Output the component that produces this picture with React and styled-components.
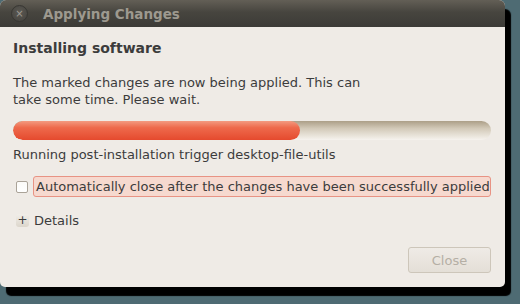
import React from 'react'
import styled, { createGlobalStyle } from 'styled-components'

const GlobalStyle = createGlobalStyle`
    html, body {
        margin: 0;
        padding: 0;
        background: #4e6b73;
        width: 520px;
        height: 304px;
        overflow: hidden;
    }
    * { box-sizing: border-box; }
`

const App = () => {
    return (<>
        <GlobalStyle />
        <Window>
            <TitleBar>
                <CloseDot>×</CloseDot>
                <Title>Applying Changes</Title>
            </TitleBar>
            <Body>
                <Heading>Installing software</Heading>
                <Message>
                    The marked changes are now being applied. This can<br />
                    take some time. Please wait.
                </Message>
                <Trough>
                    <Fill style={{ width: `${(287 / 478) * 100}%` }} />
                </Trough>
                <Status>Running post-installation trigger desktop-file-utils</Status>
                <CheckRow>
                    <CheckBox />
                    <CheckLabel>Automatically close after the changes have been successfully applied</CheckLabel>
                </CheckRow>
                <ExpanderRow>
                    <Expander>+</Expander>
                    <span>Details</span>
                </ExpanderRow>
                <Footer>
                    <Button disabled>Close</Button>
                </Footer>
            </Body>
        </Window>
    </>)
}

const Window = styled.div`
    width: 505px;
    height: 287px;
    display: flex;
    flex-direction: column;
    border-radius: 6px 6px 5px 5px;
    background: #efebe6;
    box-shadow: 6px 9px 1px #000;
    overflow: hidden;
    font-family: "DejaVu Sans", "Liberation Sans", sans-serif;
    color: #3c3c3c;
`

const TitleBar = styled.div`
    height: 27px;
    display: flex;
    align-items: center;
    padding-left: 11px;
    gap: 15px;
    background: linear-gradient(#635f56 0%, #47453f 45%, #3c3b37 100%);
`

const CloseDot = styled.div`
    width: 17px;
    height: 17px;
    border-radius: 50%;
    background: radial-gradient(circle at 50% 40%, #5a5852, #44423e);
    border: 1px solid #383733;
    color: #9e9a92;
    font-size: 10px;
    line-height: 15px;
    text-align: center;
`

const Title = styled.div`
    font-weight: bold;
    font-size: 13.5px;
    color: #9d998f;
`

const Body = styled.div`
    flex: 1;
    display: flex;
    flex-direction: column;
    padding: 0 14px 0 13px;
    font-size: 13px;
`

const Heading = styled.div`
    margin-top: 12px;
    font-weight: bold;
    font-size: 14px;
    line-height: 18px;
`

const Message = styled.div`
    margin-top: 17px;
    line-height: 17px;
`

const Trough = styled.div`
    margin-top: 13px;
    height: 19px;
    border-radius: 10px;
    background: linear-gradient(#ac9f88 0%, #d3cab9 40%, #f6f3ee 100%);
    overflow: hidden;
    display: flex;
`

const Fill = styled.div`
    height: 100%;
    border-radius: 10px;
    background: linear-gradient(#f39a80 0%, #ee6a4c 35%, #e54a2e 100%);
`

const Status = styled.div`
    margin-top: 6px;
    line-height: 17px;
`

const CheckRow = styled.div`
    margin-top: 13px;
    display: flex;
    align-items: center;
    gap: 5px;
`

const CheckBox = styled.div`
    margin-left: 3px;
    width: 12px;
    height: 12px;
    border: 1px solid #aaa398;
    border-radius: 2px;
    background: linear-gradient(#fbfaf8, #ffffff);
`

const CheckLabel = styled.div`
    flex: 1;
    height: 21px;
    line-height: 19px;
    padding-left: 2px;
    border: 1px solid #e89384;
    border-radius: 3px;
    background: #f6d9cf;
    white-space: nowrap;
`

const ExpanderRow = styled.div`
    margin-top: 15px;
    display: flex;
    align-items: center;
    gap: 5px;
    line-height: 17px;
`

const Expander = styled.div`
    margin-left: 3px;
    width: 13px;
    height: 13px;
    border-radius: 3px;
    background: linear-gradient(#f1eee9, #dcd6cc);
    font-size: 12px;
    line-height: 12px;
    text-align: center;
    color: #3c3c3c;
`

const Footer = styled.div`
    margin-top: 18px;
    display: flex;
    justify-content: flex-end;
`

const Button = styled.button`
    width: 83px;
    height: 26px;
    border: 1px solid #cdc6ba;
    border-radius: 3px;
    background: linear-gradient(#efebe6, #e4dfd7);
    font-family: "DejaVu Sans", "Liberation Sans", sans-serif;
    font-size: 13px;
    color: #b5afa5;
    padding: 0;
`

export default App
